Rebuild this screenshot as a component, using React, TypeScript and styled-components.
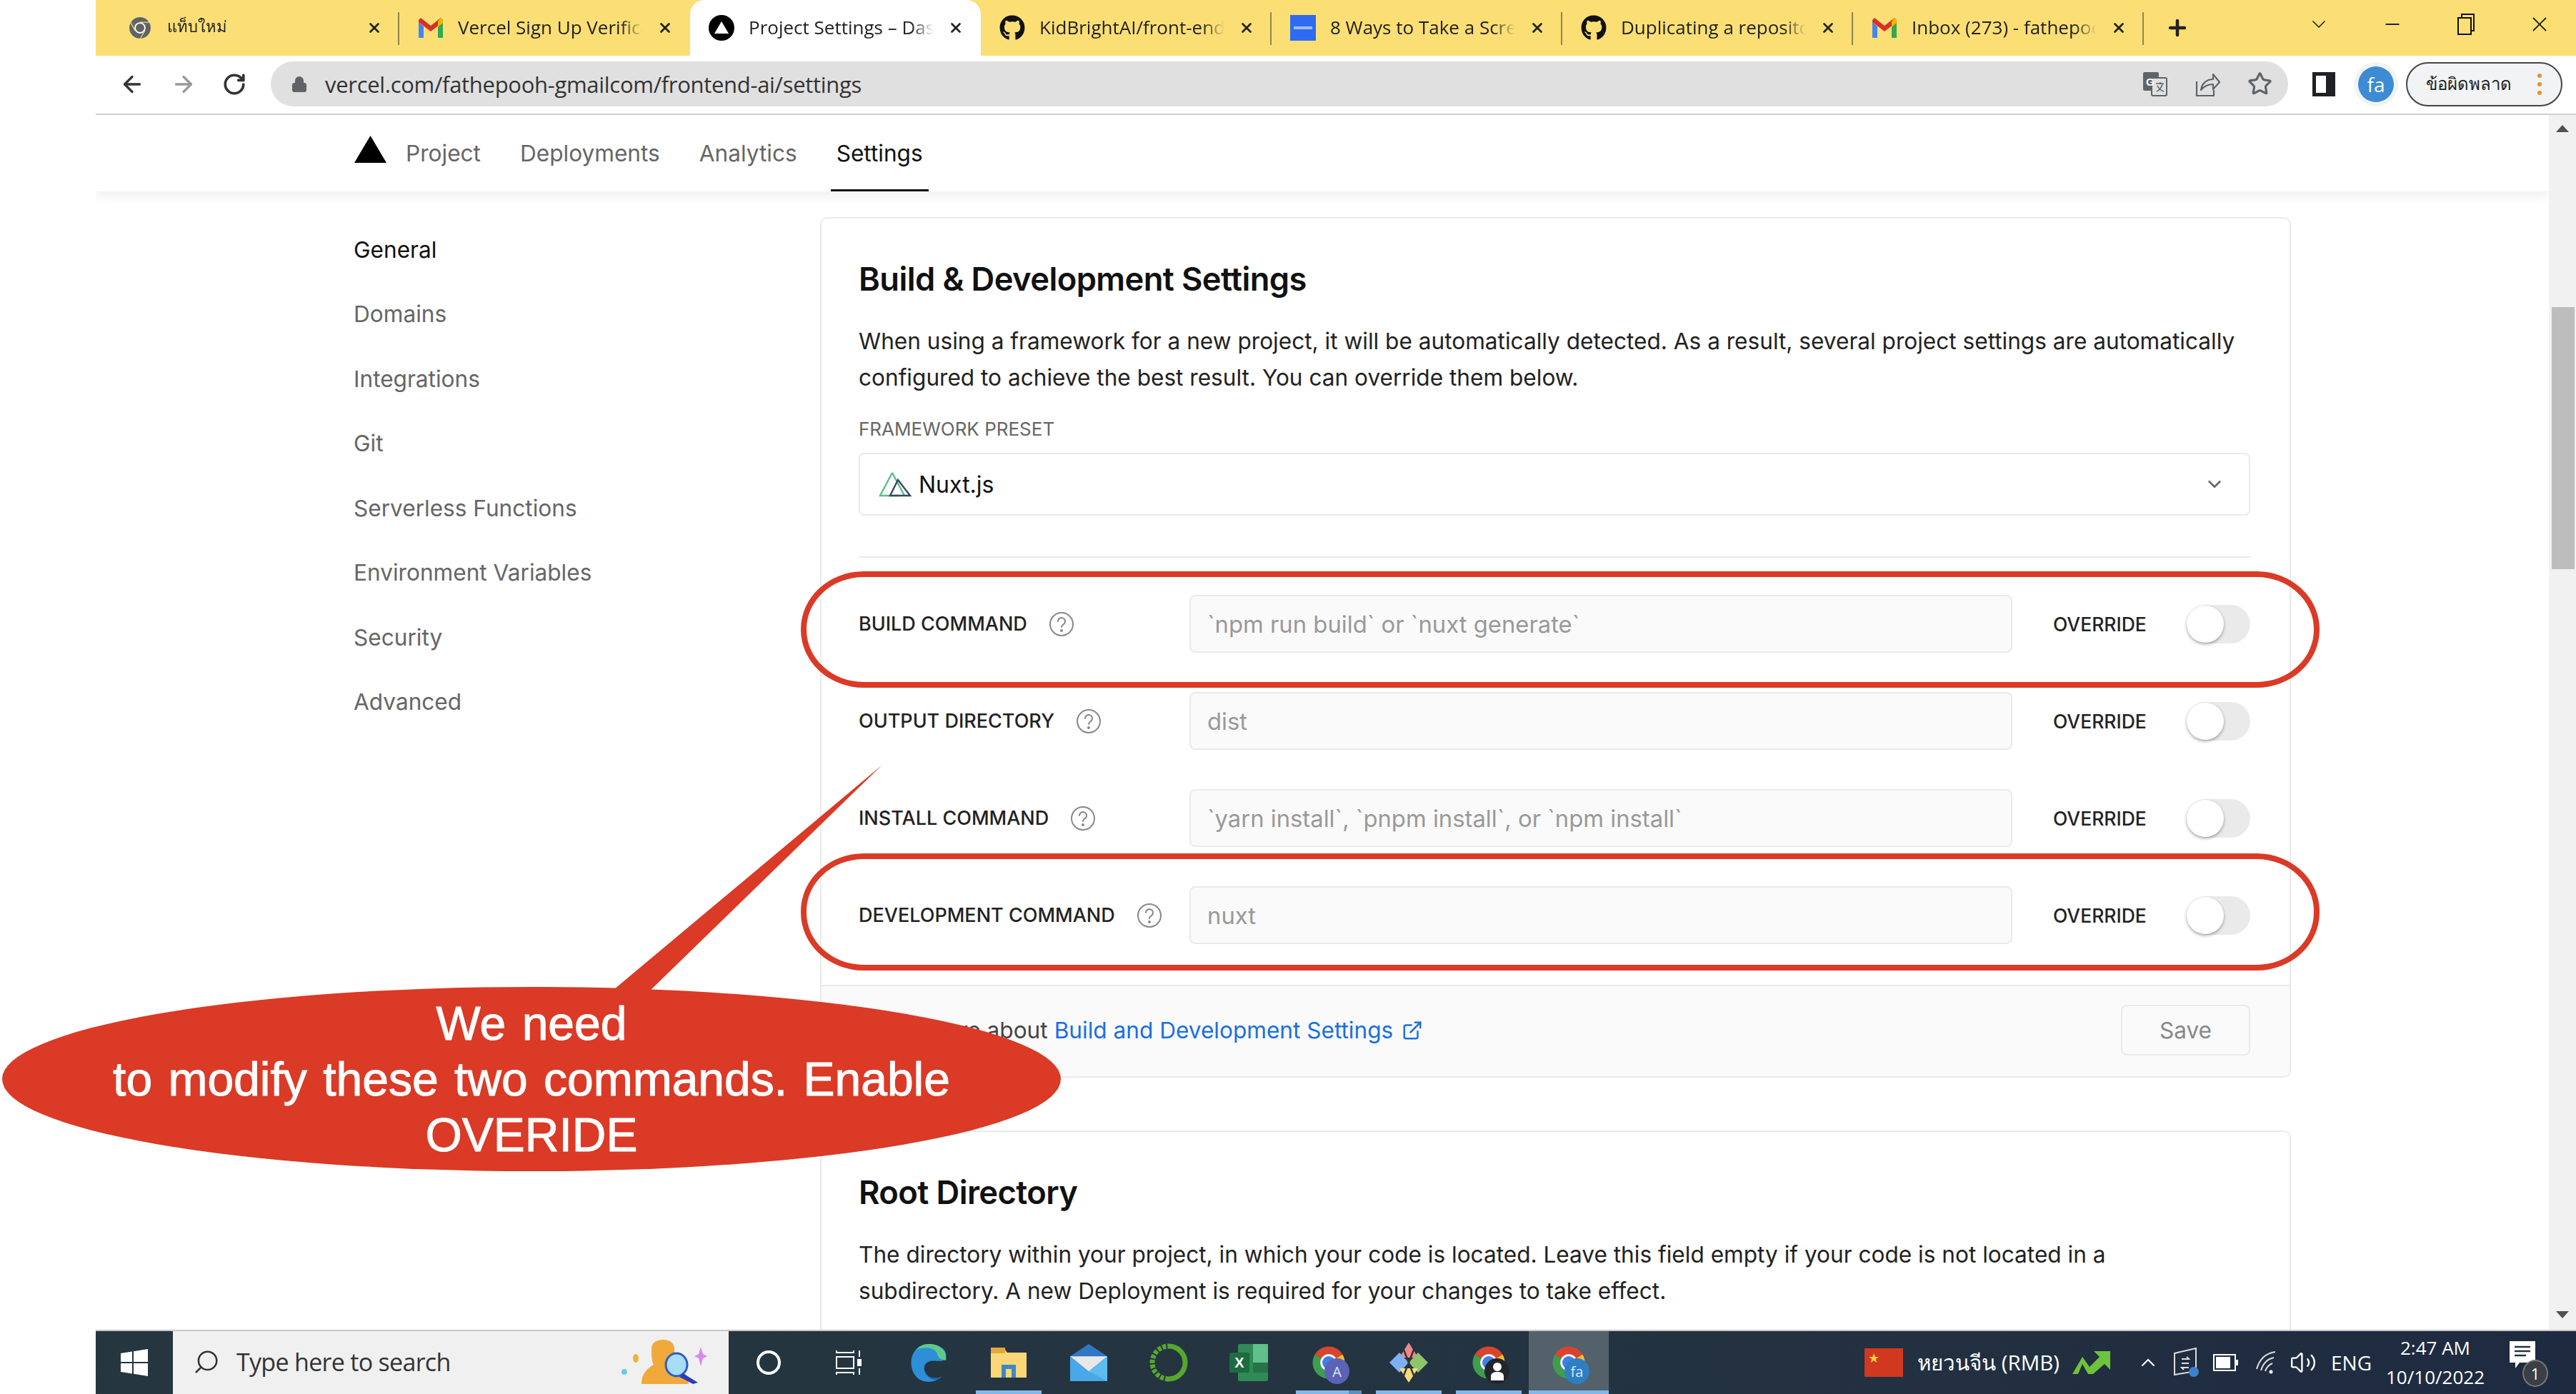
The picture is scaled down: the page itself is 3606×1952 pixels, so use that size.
import React from 'react';
import styled, { createGlobalStyle } from 'styled-components';
import { ArrowLeft, ArrowRight, RotateCw, Lock, Star, ChevronDown, ChevronUp, X, Plus, Minus, ExternalLink, Search, Volume2 } from 'lucide-react';
import { FaGithub } from 'react-icons/fa';

const Global = createGlobalStyle`
  html, body { margin: 0; padding: 0; background: #fff; }
  * { box-sizing: border-box; }
`;

const Screen = styled.div`
  position: relative;
  width: 3606px;
  height: 1952px;
  overflow: hidden;
  display: flex;
  background: #fff;
  font-family: Inter, "Liberation Sans", sans-serif;
`;

const Strip = styled.div`
  width: 134px;
  flex: none;
`;

const Win = styled.div`
  flex: 1;
  min-width: 0;
  display: flex;
  flex-direction: column;
`;

/* browser chrome */
const TabBar = styled.div`
  height: 78px;
  flex: none;
  background: #fbdf75;
  display: flex;
  align-items: stretch;
  padding-left: 18px;
  color: #222;
`;

const Tab = styled.div<{ $active?: boolean; $sep?: boolean }>`
  position: relative;
  width: 407px;
  flex: none;
  display: flex;
  align-items: center;
  padding: 0 24px 0 26px;
  gap: 20px;
  background: ${p => (p.$active ? '#fff' : 'transparent')};
  border-radius: ${p => (p.$active ? '20px 20px 0 0' : '0')};
  &::after {
    content: '';
    display: ${p => (p.$sep ? 'block' : 'none')};
    position: absolute;
    right: 0;
    top: 17px;
    bottom: 15px;
    width: 2px;
    background: #8f8550;
  }
`;

const FavSlot = styled.div`
  width: 36px;
  height: 36px;
  flex: none;
  display: flex;
  align-items: center;
  justify-content: center;
`;

const TabTitle = styled.div<{ $size?: number }>`
  flex: 1;
  min-width: 0;
  white-space: nowrap;
  overflow: hidden;
  padding-bottom: 3px;
  font: 400 ${p => p.$size ?? 26}px "Open Sans", "Noto Sans", sans-serif;
  -webkit-mask-image: linear-gradient(to right, #000 88%, transparent 100%);
  mask-image: linear-gradient(to right, #000 88%, transparent 100%);
`;

const TabRight = styled.div`
  flex: 1;
  display: flex;
  align-items: center;
  padding-left: 30px;
`;

const WinButtons = styled.div`
  margin-left: auto;
  display: flex;
  align-items: center;
  padding-bottom: 10px;
`;

const WinButton = styled.div`
  width: 103px;
  display: flex;
  justify-content: center;
`;

const Toolbar = styled.div`
  height: 83px;
  flex: none;
  display: flex;
  align-items: center;
  padding: 0 19px 2px 33px;
  border-bottom: 2px solid #d0d0d0;
  background: #fff;
  color: #333;
`;

const NavIcons = styled.div`
  display: flex;
  align-items: center;
  gap: 36px;
  width: 212px;
`;

const Omnibox = styled.div`
  width: 2824px;
  height: 63px;
  flex: none;
  border-radius: 32px;
  background: #e0e0e0;
  display: flex;
  align-items: center;
  padding: 0 22px 0 28px;
  gap: 24px;
`;

const Url = styled.div`
  flex: 1;
  font: 400 31px "Open Sans", "Noto Sans", sans-serif;
  letter-spacing: -0.3px;
  color: #333;
`;

const OmniIcons = styled.div`
  display: flex;
  align-items: center;
  gap: 38px;
  color: #5f6368;
`;

const PanelIcon = styled.div`
  width: 32px;
  height: 34px;
  margin-left: 34px;
  flex: none;
  border: solid #202124;
  border-width: 5px 13px 5px 5px;
`;

const Avatar = styled.div`
  width: 62px;
  height: 62px;
  margin-left: 26px;
  flex: none;
  border-radius: 50%;
  background: #f1f3f4;
  display: flex;
  align-items: center;
  justify-content: center;
  &::before {
    content: 'fa';
    width: 50px;
    height: 50px;
    border-radius: 50%;
    background: #3d8bd3;
    color: #fff;
    font: 400 28px/50px "Open Sans", sans-serif;
    text-align: center;
  }
`;

const ErrorPill = styled.div`
  width: 219px;
  height: 62px;
  margin-left: 11px;
  flex: none;
  border: 2px solid #444;
  border-radius: 31px;
  background: #f1f3f4;
  display: flex;
  align-items: center;
  padding-left: 26px;
  font: 400 24px "Noto Sans", "Open Sans", sans-serif;
  color: #222;
`;

const Dots = styled.div`
  margin-left: auto;
  margin-right: 27px;
  display: flex;
  flex-direction: column;
  gap: 6px;
  span {
    width: 6px;
    height: 6px;
    border-radius: 50%;
    background: #e8912d;
  }
`;

/* page */
const Body = styled.div`
  flex: 1;
  min-height: 0;
  display: flex;
`;

const Page = styled.div`
  flex: 1;
  min-width: 0;
  overflow: hidden;
`;

const TopNav = styled.div`
  height: 107px;
  display: flex;
  align-items: stretch;
  padding-left: 362px;
  box-shadow: 0 8px 14px rgba(0, 0, 0, 0.06);
  gap: 39px;
`;

const NavLink = styled.div<{ $active?: boolean }>`
  display: flex;
  align-items: center;
  padding: 2px 8px 0;
  font-size: 31.6px;
  color: ${p => (p.$active ? '#111' : '#666')};
  border-bottom: 3px solid ${p => (p.$active ? '#111' : 'transparent')};
`;

const Logo = styled.div`
  display: flex;
  align-items: center;
  margin-right: -20px;
  padding-bottom: 12px;
`;

const Main = styled.div`
  display: flex;
  padding: 36px 0 0 361px;
`;

const Side = styled.div`
  width: 653px;
  flex: none;
`;

const SideItem = styled.div<{ $active?: boolean }>`
  height: 90.5px;
  display: flex;
  align-items: center;
  font-size: 31.6px;
  color: ${p => (p.$active ? '#111' : '#666')};
`;

const Col = styled.div`
  width: 2059px;
  flex: none;
  display: flex;
  flex-direction: column;
  gap: 74px;
`;

const Card = styled.div`
  border: 2px solid #eaeaea;
  border-radius: 10px;
  background: #fff;
`;

const CardBody = styled.div`
  padding: 57px 55px 55px 52px;
`;

const Title = styled.h2`
  margin: 0;
  font-size: 45.3px;
  line-height: 56px;
  font-weight: 600;
  color: #111;
  letter-spacing: -0.6px;
`;

const Desc = styled.p`
  margin: 33px 0 0;
  font-size: 31.6px;
  line-height: 51px;
  color: #222;
  white-space: nowrap;
`;

const FieldLabel = styled.div`
  margin-top: 31px;
  font-size: 26px;
  line-height: 32px;
  color: #666;
`;

const SelectBox = styled.div`
  margin-top: 17px;
  height: 88px;
  border: 2px solid #eaeaea;
  border-radius: 8px;
  display: flex;
  align-items: center;
  justify-content: space-between;
  padding: 0 33px 0 26px;
  font-size: 32px;
  color: #111;
`;

const SelectValue = styled.div`
  display: flex;
  align-items: center;
  gap: 10px;
`;

const Rule = styled.div`
  margin: 57px 0 52px;
  height: 2px;
  background: #eaeaea;
`;

const Rows = styled.div`
  display: flex;
  flex-direction: column;
  gap: 55px;
  margin-bottom: 2px;
`;

const Row = styled.div`
  position: relative;
  display: flex;
  align-items: center;
  height: 81px;
`;

const RowLabel = styled.div`
  width: 463px;
  flex: none;
  display: flex;
  align-items: center;
  gap: 30px;
  font-size: 27px;
  font-weight: 500;
  color: #222;
  svg { flex: none; }
`;

const Input = styled.div`
  width: 1152px;
  height: 81px;
  flex: none;
  border: 2px solid #eaeaea;
  border-radius: 8px;
  background: #fafafa;
  display: flex;
  align-items: center;
  padding-left: 23px;
  font-size: 32.8px;
  color: #999;
`;

const Override = styled.div`
  margin-left: 57px;
  width: 187px;
  flex: none;
  font-size: 26.5px;
  font-weight: 500;
  color: #222;
`;

const Toggle = styled.div`
  position: relative;
  width: 89px;
  height: 54px;
  flex: none;
  border-radius: 27px;
  background: #eaeaea;
  &::before {
    content: '';
    position: absolute;
    left: 0;
    top: 1px;
    width: 52px;
    height: 52px;
    border-radius: 50%;
    background: #fff;
    box-shadow: 0 2px 4px rgba(0, 0, 0, 0.35);
  }
`;

const Ring = styled.div<{ $top: number; $bottom: number }>`
  position: absolute;
  left: -81px;
  right: -97px;
  top: ${p => p.$top}px;
  bottom: ${p => p.$bottom}px;
  border: 8px solid #da3a26;
  border-radius: 88px / 81px;
  pointer-events: none;
`;

const CardFoot = styled.div`
  height: 128px;
  border-top: 2px solid #eaeaea;
  border-radius: 0 0 10px 10px;
  background: #fafafa;
  display: flex;
  align-items: center;
  justify-content: space-between;
  padding: 0 55px 3px 52px;
  font-size: 31.6px;
  color: #444;
`;

const DocLink = styled.span`
  color: #1a6fe0;
  display: inline-flex;
  align-items: center;
  gap: 12px;
  margin-left: 9px;
`;

const SaveBtn = styled.div`
  width: 181px;
  height: 71px;
  border: 2px solid #eaeaea;
  border-radius: 8px;
  background: #fafafa;
  display: flex;
  align-items: center;
  justify-content: center;
  color: #888;
`;

const ScrollBar = styled.div`
  position: relative;
  width: 38px;
  flex: none;
  background: #f1f1f1;
`;

const ScrollArrow = styled.div<{ $down?: boolean }>`
  position: absolute;
  left: 10px;
  ${p => (p.$down ? 'bottom: 16px;' : 'top: 14px;')}
  width: 0;
  height: 0;
  border-left: 9px solid transparent;
  border-right: 9px solid transparent;
  ${p => (p.$down ? 'border-top: 10px solid #505050;' : 'border-bottom: 10px solid #505050;')}
`;

const ScrollThumb = styled.div`
  position: absolute;
  left: 4px;
  right: 2px;
  top: 269px;
  height: 367px;
  background: #bdbdbd;
`;

/* callout */
const Callout = styled.div`
  position: absolute;
  left: 3px;
  top: 1071px;
  width: 1482px;
  height: 569px;
`;

const CalloutShape = styled.svg`
  display: block;
`;

const CalloutText = styled.div`
  position: absolute;
  left: 0;
  right: 0;
  top: 323px;
  text-align: center;
  font: 400 66px/78px "Liberation Sans", Arial, sans-serif;
  word-spacing: 4px;
  color: #fff;
  -webkit-text-stroke: 1px #fff;
`;

/* taskbar */
const Taskbar = styled.div`
  height: 90px;
  flex: none;
  display: flex;
  align-items: stretch;
  background: linear-gradient(to right, #25363f, #243341 60%, #1e2a40);
  border-top: 2px solid #c8c8c8;
  color: #fff;
`;

const StartBtn = styled.div`
  width: 108px;
  flex: none;
  display: flex;
  align-items: center;
  justify-content: center;
`;

const SearchBox = styled.div`
  width: 778px;
  flex: none;
  background: #f0f0f0;
  color: #333;
  display: flex;
  align-items: center;
  padding: 0 0 2px 28px;
  gap: 23px;
  font: 400 34px "Open Sans", "Noto Sans", sans-serif;
  letter-spacing: -0.7px;
`;

const SearchGlass = styled(Search)`
  transform: scaleX(-1);
`;

const SearchArt = styled.div`
  margin-left: auto;
  margin-right: 28px;
  display: flex;
`;

const Slot = styled.div<{ $active?: boolean; $open?: boolean; $stack?: boolean }>`
  position: relative;
  width: 112px;
  flex: none;
  display: flex;
  align-items: center;
  justify-content: center;
  background: ${p => (p.$active ? '#53616b' : 'transparent')};
  &::after {
    content: '';
    display: ${p => (p.$open ? 'block' : 'none')};
    position: absolute;
    left: ${p => (p.$active ? 0 : 10)}px;
    right: ${p => (p.$active ? 0 : 10)}px;
    bottom: 0;
    height: 5px;
    background: ${p => (p.$stack ? 'linear-gradient(to right, #84b7e8 80%, #5e8fbd 80%)' : '#84b7e8')};
  }
`;

const Badge = styled.div<{ $bg: string }>`
  position: absolute;
  left: 50px;
  top: 38px;
  width: 35px;
  height: 36px;
  border-radius: 50%;
  background: ${p => p.$bg};
  display: flex;
  align-items: center;
  justify-content: center;
  font: 400 20px "Open Sans", sans-serif;
  color: #dfe6f5;
`;

const Tray = styled.div`
  margin-left: auto;
  display: flex;
  align-items: center;
  padding-right: 39px;
  font: 400 28px "Open Sans", "Noto Sans", sans-serif;
`;

const TrayItem = styled.div<{ $gap: number }>`
  margin-left: ${p => p.$gap}px;
  display: flex;
  align-items: center;
  white-space: nowrap;
`;

const TrayLabel = styled(TrayItem)`
  font-size: 29.5px;
`;

const Flag = styled.div`
  position: relative;
  width: 54px;
  height: 40px;
  background: #d0381f;
  &::before {
    content: '★';
    position: absolute;
    left: 5px;
    top: 2px;
    font-size: 18px;
    line-height: 22px;
    color: #f5d33c;
  }
`;

const Clock = styled.div`
  margin-left: 20px;
  width: 138px;
  text-align: center;
  font-size: 26px;
  line-height: 41px;
`;

const Notify = styled.div`
  position: relative;
  margin-left: 35px;
  width: 54px;
  height: 60px;
`;

const NotifyCount = styled.div`
  position: absolute;
  right: 0;
  bottom: -4px;
  width: 36px;
  height: 38px;
  border-radius: 50%;
  background: #3a3f45;
  border: 2px solid #777;
  display: flex;
  align-items: center;
  justify-content: center;
  font-size: 22px;
`;

const ChromeLogo = ({ size = 36, gray }: { size?: number; gray?: boolean }) => (
  <svg width={size} height={size} viewBox="0 0 48 48">
    <path d="M24 24 41.3 14A20 20 0 0 0 6.700 14Z" fill={gray ? '#5f6368' : '#d8452f'} />
    <path d="M24 24 41.3 14A20 20 0 0 1 24 44Z" fill={gray ? '#5f6368' : '#f5c02c'} />
    <path d="M24 24 24 44A20 20 0 0 1 6.700 14Z" fill={gray ? '#5f6368' : '#3f9d4f'} />
    <circle cx="24" cy="24" r="10.500" fill="#fff" />
    <circle cx="24" cy="24" r="8" fill={gray ? '#5f6368' : '#3f7fe6'} />
    {gray && <path d="M24 13.500H42M14.900 29.200 6 13.500M33.100 29.200 24 45" stroke="#fbdf75" strokeWidth="1.500" fill="none" />}
  </svg>
);

const GmailLogo = () => (
  <svg width="34" height="28" viewBox="0 0 34 28">
    <path d="M0 6v22h7V12Z" fill="#4285f4" />
    <path d="M27 12v16h7V6Z" fill="#34a853" />
    <path d="M0 6 17 19 34 6V3l-3-3-14 11L3 0 0 3Z" fill="#d93025" />
    <path d="M27 5v8l7-6V3l-3-3Z" fill="#f5b400" />
  </svg>
);

const VercelTab = () => (
  <svg width="36" height="36" viewBox="0 0 36 36">
    <circle cx="18" cy="18" r="18" fill="#000" />
    <path d="M18 9 28 26H8Z" fill="#fff" />
  </svg>
);

const DocFav = () => (
  <svg width="36" height="36" viewBox="0 0 36 36">
    <rect width="36" height="36" fill="#2f6bf0" />
    <rect x="5" y="16" width="26" height="4" fill="#9fbcf8" />
  </svg>
);

const HelpIcon = () => (
  <svg width="36" height="36" viewBox="0 0 36 36" fill="none" stroke="#888" strokeWidth="2">
    <circle cx="18" cy="18" r="16" />
    <path d="M13 14a5 5 0 1 1 7.500 4.400c-1.600.9-2.500 1.800-2.500 3.600" strokeLinecap="round" />
    <circle cx="18" cy="27" r="1" fill="#888" />
  </svg>
);

const TABS = [
  { icon: <ChromeLogo gray />, title: 'แท็บใหม่', size: 22, sep: true },
  { icon: <GmailLogo />, title: 'Vercel Sign Up Verification' },
  { icon: <VercelTab />, title: 'Project Settings – Dashboard', active: true },
  { icon: <FaGithub size={36} color="#111" />, title: 'KidBrightAI/front-end-ai', sep: true },
  { icon: <DocFav />, title: '8 Ways to Take a Screenshot', sep: true },
  { icon: <FaGithub size={36} color="#111" />, title: 'Duplicating a repository', sep: true },
  { icon: <GmailLogo />, title: 'Inbox (273) - fathepooh@gmail', sep: true },
];

const SIDE = ['General', 'Domains', 'Integrations', 'Git', 'Serverless Functions', 'Environment Variables', 'Security', 'Advanced'];

const ROWS = [
  { label: 'BUILD COMMAND', value: '`npm run build` or `nuxt generate`', ring: { top: -33, bottom: -49 } },
  { label: 'OUTPUT DIRECTORY', value: 'dist' },
  { label: 'INSTALL COMMAND', value: '`yarn install`, `pnpm install`, or `npm install`' },
  { label: 'DEVELOPMENT COMMAND', value: 'nuxt', ring: { top: -46, bottom: -37 } },
];

const TASK_APPS = [
  {
    node: (
      <svg width="56" height="55" viewBox="0 0 50 54">
        <path d="M25 1C10 1 1 13 1 27c0 15 10 26 24 26 8 0 14-3 18-7-10 4-22 1-24-10-1-7 4-12 12-12 9 0 17 3 18-7C50 8 38 1 25 1Z" fill="#2c8fd8" />
        <path d="M49 23C50 8 38 1 25 1c-7 0-13 3-17 8 8-4 27-6 30 9 2 3 7 6 11 5Z" fill="#5fc98a" />
        <path d="M19 36c1 8 8 14 17 14 3 0 5-1 7-4-10 4-22 1-24-10Z" fill="#1c5fa8" />
      </svg>
    ),
  },
  {
    open: true,
    node: (
      <svg width="50" height="42" viewBox="0 0 50 42">
        <path d="M0 3h20l3 4h27v35H0Z" fill="#fcd777" />
        <path d="M0 0h20v8H0Z" fill="#e0a93a" />
        <path d="M15 42V24h20v18h-6V30h-8v12Z" fill="#3f87c9" />
      </svg>
    ),
  },
  {
    node: (
      <svg width="54" height="52" viewBox="0 0 54 54">
        <path d="M0 18 27 0l27 18v36H0Z" fill="#2f77c5" />
        <path d="M0 18h54L27 40Z" fill="#e8e8e8" />
        <path d="M0 18 27 40 54 54H0Z" fill="#4aa8e8" />
        <path d="M54 18v36L27 40Z" fill="#5fbcf0" />
      </svg>
    ),
  },
  {
    node: (
      <svg width="54" height="54" viewBox="0 0 54 54" fill="none">
        <path d="M27 4A23 23 0 0 1 27 50" stroke="#57a72e" strokeWidth="7" />
        <path d="M27 50A23 23 0 0 1 27 4" stroke="#57a72e" strokeWidth="7" strokeDasharray="5 2" />
      </svg>
    ),
  },
  {
    node: (
      <svg width="54" height="52" viewBox="0 0 54 52">
        <rect x="12" y="0" width="42" height="52" rx="2" fill="#2f8a55" />
        <rect x="33" y="0" width="21" height="26" fill="#5fc08a" />
        <rect x="33" y="26" width="21" height="14" fill="#28724a" />
        <rect x="0" y="12" width="28" height="28" rx="2" fill="#1d6b40" />
        <text x="14" y="33" textAnchor="middle" fontFamily="Liberation Sans" fontWeight="700" fontSize="20" fill="#fff">X</text>
      </svg>
    ),
  },
  { open: true, stack: true, chrome: true, badge: '#5b62b8', text: 'A' },
  {
    open: true,
    node: (
      <svg width="54" height="56" viewBox="0 0 54 56">
        <path d="M27 0 40 21H14Z" fill="#ef8a8a" />
        <path d="M14 14 27 28 14 42 0 28Z" fill="#7fb0f5" />
        <path d="M40 14 54 28 40 42 27 28Z" fill="#8fc46a" />
        <path d="M14 36H40L27 56Z" fill="#f5dc7a" />
        <path d="M20 10 34 46M34 10 20 46" stroke="#333" strokeWidth="2.500" />
      </svg>
    ),
  },
  {
    open: true,
    chrome: true,
    badge: '#22262a',
    text: (
      <svg width="20" height="26" viewBox="0 0 20 26" fill="#fff">
        <circle cx="10" cy="7" r="6" />
        <path d="M1 26v-6c0-4 4-6 9-6s9 2 9 6v6Z" />
      </svg>
    ),
  },
  { open: true, active: true, chrome: true, badge: '#2d7fc4', text: 'fa' },
];

function App() {
  return (
    <Screen>
      <Global />
      <Strip />
      <Win>
        <TabBar>
          {TABS.map((t, i) => (
            <Tab key={i} $active={t.active} $sep={t.sep}>
              <FavSlot>{t.icon}</FavSlot>
              <TabTitle $size={t.size}>{t.title}</TabTitle>
              <X size={22} strokeWidth={3} color="#222" />
            </Tab>
          ))}
          <TabRight>
            <Plus size={34} strokeWidth={3.2} color="#222" />
            <WinButtons>
              <WinButton>
                <ChevronDown size={32} strokeWidth={1.3} />
              </WinButton>
              <WinButton>
                <Minus size={30} strokeWidth={1.6} />
              </WinButton>
              <WinButton>
                <svg width="24" height="30" viewBox="0 0 24 30" fill="none" stroke="#111" strokeWidth="2">
                  <rect x="1" y="6" width="18" height="23" />
                  <path d="M6 6V1h17v23h-4" />
                </svg>
              </WinButton>
              <WinButton>
                <X size={34} strokeWidth={1.3} />
              </WinButton>
            </WinButtons>
          </TabRight>
        </TabBar>
        <Toolbar>
          <NavIcons>
            <ArrowLeft size={36} strokeWidth={2.2} />
            <ArrowRight size={36} strokeWidth={2.2} color="#999" />
            <RotateCw size={34} strokeWidth={2.6} />
          </NavIcons>
          <Omnibox>
            <Lock size={24} fill="#5f6368" color="#5f6368" />
            <Url>vercel.com/fathepooh-gmailcom/frontend-ai/settings</Url>
            <OmniIcons>
              <svg width="34" height="34" viewBox="0 0 34 34">
                <rect x="0" y="0" width="22" height="26" rx="2" fill="#5f6368" />
                <rect x="12" y="8" width="21" height="25" rx="2" fill="#e0e0e0" stroke="#5f6368" strokeWidth="2" />
                <text x="4" y="19" fontFamily="Liberation Sans" fontWeight="700" fontSize="15" fill="#fff">G</text>
                <path d="M18 16h11M24 14v3M27 17c-2 6-5 9-8 10M20 19c2 4 5 7 9 8" stroke="#5f6368" strokeWidth="1.600" fill="none" />
              </svg>
              <svg width="36" height="36" viewBox="0 0 36 36" fill="none" stroke="#5f6368" strokeWidth="2.200">
                <path d="M3 14v20h24v-8" />
                <path d="M9 26c1-9 8-15 17-15V4l9 11-9 10v-7c-7 0-12 2-17 8Z" strokeLinejoin="round" />
              </svg>
              <Star size={35} strokeWidth={2.2} />
            </OmniIcons>
          </Omnibox>
          <PanelIcon />
          <Avatar />
          <ErrorPill>
            ข้อผิดพลาด
            <Dots>
              <span />
              <span />
              <span />
            </Dots>
          </ErrorPill>
        </Toolbar>
        <Body>
          <Page>
            <TopNav>
              <Logo>
                <svg width="45" height="38" viewBox="0 0 45 38">
                  <path d="M22.500 0 45 38H0Z" fill="#000" />
                </svg>
              </Logo>
              <NavLink>Project</NavLink>
              <NavLink>Deployments</NavLink>
              <NavLink>Analytics</NavLink>
              <NavLink $active>Settings</NavLink>
            </TopNav>
            <Main>
              <Side>
                {SIDE.map((s, i) => (
                  <SideItem key={s} $active={i === 0}>
                    {s}
                  </SideItem>
                ))}
              </Side>
              <Col>
                <Card>
                  <CardBody>
                    <Title>Build &amp; Development Settings</Title>
                    <Desc>
                      When using a framework for a new project, it will be automatically detected. As a result, several project settings are automatically
                      <br />
                      configured to achieve the best result. You can override them below.
                    </Desc>
                    <FieldLabel>FRAMEWORK PRESET</FieldLabel>
                    <SelectBox>
                      <SelectValue>
                        <svg width="46" height="36" viewBox="0 0 46 36" fill="none" strokeWidth="2.400">
                          <path d="M19 2 2 34h26" stroke="#58bd8e" />
                          <path d="M19 2 36 34" stroke="#58bd8e" />
                          <path d="M27 12 44 34H16Z" stroke="#35495e" />
                        </svg>
                        Nuxt.js
                      </SelectValue>
                      <ChevronDown size={30} strokeWidth={2} color="#666" />
                    </SelectBox>
                    <Rule />
                    <Rows>
                      {ROWS.map(r => (
                        <Row key={r.label}>
                          <RowLabel>
                            {r.label}
                            <HelpIcon />
                          </RowLabel>
                          <Input>{r.value}</Input>
                          <Override>OVERRIDE</Override>
                          <Toggle />
                          {r.ring && <Ring $top={r.ring.top} $bottom={r.ring.bottom} />}
                        </Row>
                      ))}
                    </Rows>
                  </CardBody>
                  <CardFoot>
                    <span>
                      Learn more about
                      <DocLink>
                        Build and Development Settings
                        <ExternalLink size={30} strokeWidth={2} />
                      </DocLink>
                    </span>
                    <SaveBtn>Save</SaveBtn>
                  </CardFoot>
                </Card>
                <Card>
                  <CardBody>
                    <Title>Root Directory</Title>
                    <Desc>
                      The directory within your project, in which your code is located. Leave this field empty if your code is not located in a
                      <br />
                      subdirectory. A new Deployment is required for your changes to take effect.
                    </Desc>
                  </CardBody>
                </Card>
              </Col>
            </Main>
          </Page>
          <ScrollBar>
            <ScrollArrow />
            <ScrollThumb />
            <ScrollArrow $down />
          </ScrollBar>
        </Body>
        <Taskbar>
          <StartBtn>
            <svg width="38" height="38" viewBox="0 0 38 38" fill="#fff">
              <path d="M0 6 16 3.500V18H0ZM18 3.200 38 0V18H18ZM0 20H16V34.500L0 32ZM18 20H38V38L18 34.800Z" />
            </svg>
          </StartBtn>
          <SearchBox>
            <SearchGlass size={38} strokeWidth={1.6} />
            Type here to search
            <SearchArt>
              <svg width="122" height="62" viewBox="0 0 122 62">
                <circle cx="4" cy="45" r="4" fill="#69cde0" />
                <ellipse cx="20" cy="26" rx="4" ry="6" fill="#f2b234" />
                <path d="M111 10l3 10 6 3-6 3-3 11-3-11-6-3 6-3Z" fill="#d68af0" />
                <path d="M28 62c0-14 8-22 17-27-3-6-3-14-3-22 0-8 6-13 16-13s16 5 16 13c0 8 0 16-2 22 10 5 22 13 22 27Z" fill="#f0a93a" />
                <ellipse cx="77" cy="35" rx="15" ry="16" fill="#a9dcf5" stroke="#2d5fc0" strokeWidth="3" />
                <path d="M86 47l21 13-7 2-19-10Z" fill="#2a3cc0" />
              </svg>
            </SearchArt>
          </SearchBox>
          <Slot>
            <svg width="36" height="36" viewBox="0 0 36 36" fill="none" stroke="#fff" strokeWidth="4">
              <circle cx="18" cy="18" r="15" />
            </svg>
          </Slot>
          <Slot>
            <svg width="36" height="36" viewBox="0 0 36 36" fill="none" stroke="#fff" strokeWidth="2">
              <path d="M1 1v3h24V1M1 35v-3h24v3" />
              <rect x="1" y="10" width="24" height="16" />
              <path d="M33 1v9M33 26v9" />
              <rect x="31" y="14" width="4" height="8" fill="#fff" />
            </svg>
          </Slot>
          {TASK_APPS.map((a, i) => (
            <Slot key={i} $open={a.open} $active={a.active} $stack={a.stack}>
              {a.chrome ? <ChromeLogo size={54} /> : a.node}
              {a.chrome && <Badge $bg={a.badge as string}>{a.text}</Badge>}
            </Slot>
          ))}
          <Tray>
            <Flag />
            <TrayLabel $gap={20}>หยวนจีน (RMB)</TrayLabel>
            <TrayItem $gap={18}>
              <svg width="53" height="32" viewBox="0 0 53 32">
                <path d="M0 32 14 8l10 14 14-14-8-8h23v26l-8-8-16 14H22L14 18 8 32Z" fill="#6fc23c" />
              </svg>
            </TrayItem>
            <TrayItem $gap={37}>
              <ChevronUp size={32} strokeWidth={1.6} />
            </TrayItem>
            <TrayItem $gap={19}>
              <svg width="37" height="42" viewBox="0 0 37 42" fill="none" stroke="#ddd" strokeWidth="2">
                <path d="M2 8 32 1v32L2 38Z" />
                <path d="M12 22h10M12 16h10l-3-3M22 28H12l3 3" />
                <circle cx="29" cy="34" r="7" fill="#3f7fd0" stroke="none" />
              </svg>
            </TrayItem>
            <TrayItem $gap={19}>
              <svg width="36" height="24" viewBox="0 0 36 24" fill="none" stroke="#fff" strokeWidth="2">
                <rect x="1" y="1" width="30" height="22" />
                <rect x="5" y="5" width="18" height="14" fill="#fff" />
                <rect x="32" y="8" width="3" height="8" fill="#fff" stroke="none" />
              </svg>
            </TrayItem>
            <TrayItem $gap={23}>
              <svg width="30" height="34" viewBox="0 0 30 34" fill="none" stroke="#ddd" strokeWidth="2">
                <path d="M2 26C6 12 14 4 28 2M8 28C11 18 17 12 26 10M14 29c2-6 5-9 10-11" />
                <circle cx="22" cy="30" r="2.500" fill="#fff" stroke="none" />
              </svg>
            </TrayItem>
            <TrayItem $gap={18}>
              <Volume2 size={38} strokeWidth={1.5} />
            </TrayItem>
            <TrayItem $gap={20}>ENG</TrayItem>
            <Clock>
              2:47 AM
              <br />
              10/10/2022
            </Clock>
            <Notify>
              <svg width="36" height="44" viewBox="0 0 36 44">
                <path d="M0 0h36v30H14l-6 8v-8H0Z" fill="#fff" />
                <path d="M7 8h22M7 14h22M7 20h16" stroke="#243441" strokeWidth="2.500" />
              </svg>
              <NotifyCount>1</NotifyCount>
            </Notify>
          </Tray>
        </Taskbar>
      </Win>
      <Callout>
        <CalloutShape width="1482" height="569" viewBox="0 0 1482 569">
          <ellipse cx="741" cy="440" rx="741" ry="129" fill="#da3a26" />
          <path d="M1232 0 857 314V340H907V316Z" fill="#da3a26" />
        </CalloutShape>
        <CalloutText>
          We need
          <br />
          to modify these two commands. Enable
          <br />
          OVERIDE
        </CalloutText>
      </Callout>
    </Screen>
  );
}

export default App;
